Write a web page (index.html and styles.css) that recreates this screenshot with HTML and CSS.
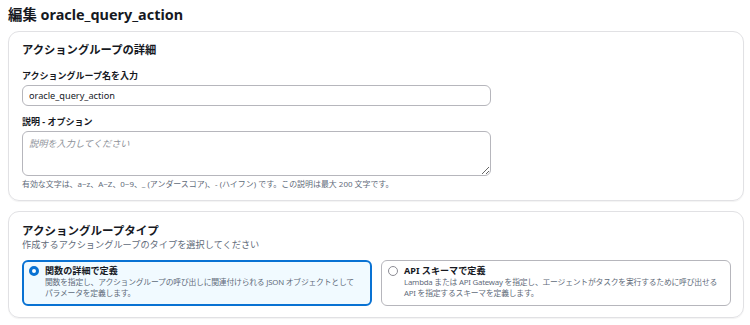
FILE: index.html
```html
<!DOCTYPE html>
<html lang="ja">
<head>
    <meta charset="UTF-8">
    <title>編集 oracle_query_action</title>
    <link rel="stylesheet" href="styles.css">
</head>
<body>
    <h1 class="page-title">編集 oracle_query_action</h1>

    <div class="card">
        <h2 class="card-title">アクショングループの詳細</h2>
        <div class="field">
            <label class="field-label">アクショングループ名を入力</label>
            <input class="text-input" type="text" value="oracle_query_action">
        </div>
        <div class="field">
            <label class="field-label">説明 - オプション</label>
            <textarea class="text-area" placeholder="説明を入力してください"></textarea>
            <div class="field-hint">有効な文字は、a~z、A~Z、0~9、_ (アンダースコア)、- (ハイフン) です。この説明は最大 200 文字です。</div>
        </div>
    </div>

    <div class="card">
        <h2 class="card-title type-title">アクショングループタイプ</h2>
        <div class="card-desc">作成するアクショングループのタイプを選択してください</div>
        <div class="tiles">
            <div class="tile is-selected">
                <span class="radio"></span>
                <div class="tile-body">
                    <div class="tile-title">関数の詳細で定義</div>
                    <div class="tile-desc">関数を指定し、アクショングループの呼び出しに関連付けられる JSON オブジェクトとしてパラメータを定義します。</div>
                </div>
            </div>
            <div class="tile">
                <span class="radio"></span>
                <div class="tile-body">
                    <div class="tile-title">API スキーマで定義</div>
                    <div class="tile-desc">Lambda または API Gateway を指定し、エージェントがタスクを実行するために呼び出せる API を指定するスキーマを定義します。</div>
                </div>
            </div>
        </div>
    </div>
</body>
</html>
```

FILE: styles.css
```css
:root {
    --text-primary: #16191f;
    --text-secondary: #5f6b7a;
    --border-card: #e1e1e4;
    --border-input: #b6b6bc;
    --accent: #0972d3;
}

body {
    margin: 0;
    padding: 0 6px 0 8px;
    background: #fff;
    color: var(--text-primary);
    font-family: "Noto Sans", "Noto Sans CJK JP", sans-serif;
}

.page-title {
    margin: 0 0 2px 0;
    font-size: 14.4px;
    font-weight: 700;
    line-height: 29px;
}

/* --- cards --- */
.card {
    border: 1px solid var(--border-card);
    border-radius: 11px;
    padding: 10px 12px 11px 13px;
    margin-bottom: 10px;
    box-shadow: 0 1px 1px rgba(0, 0, 0, 0.05);
}

.card-title {
    margin: 0 0 13px 0;
    font-size: 11.3px;
    font-weight: 700;
    line-height: 15px;
}
.card-title.type-title { font-size: 11.5px; line-height: 17px; margin: 0; }
.card-desc { font-size: 9.2px; color: var(--text-secondary); line-height: 12px; margin-bottom: 9px; }

.field { margin-bottom: 10px; }
.field:last-child { margin-bottom: 0; }
.field-label { display: block; font-size: 9px; font-weight: 700; line-height: 12px; margin-bottom: 3px; }
.field .text-area { margin-top: 1px; }

.text-input, .text-area {
    display: block;
    box-sizing: border-box;
    width: 469px;
    margin: 0;
    border: 1px solid var(--border-input);
    border-radius: 6px;
    font-family: inherit;
    font-size: 9.2px;
    color: var(--text-primary);
    padding: 0 6px;
}
.text-input { height: 21px; }
.text-area { height: 45px; padding-top: 4px; resize: vertical; }
.text-area::placeholder { color: #8d9199; font-style: italic; }

.field-hint { font-size: 7.95px; color: var(--text-secondary); line-height: 10px; margin-top: 3px; }

/* --- radio tiles --- */
.tiles { display: grid; grid-template-columns: 1fr 1fr; gap: 9px; }

.tile {
    display: flex;
    gap: 6px;
    height: 46px;
    box-sizing: border-box;
    border: 1px solid var(--border-input);
    border-radius: 6px;
    padding: 4px 1px 0 6px;
}
.tile.is-selected { border: 2px solid var(--accent); background: #f1faff; padding: 3px 10px 0 5px; }

.radio {
    flex: none;
    width: 10px;
    height: 10px;
    margin-top: 1px;
    border: 1px solid #8c8c94;
    border-radius: 50%;
    box-sizing: border-box;
    background: #fff;
}
.is-selected .radio { border: 3px solid var(--accent); }

.tile-title { font-size: 9.1px; font-weight: 700; line-height: 12px; }
.tile-desc { font-size: 7.8px; color: var(--text-secondary); line-height: 10.5px; letter-spacing: -0.2px; }
```
